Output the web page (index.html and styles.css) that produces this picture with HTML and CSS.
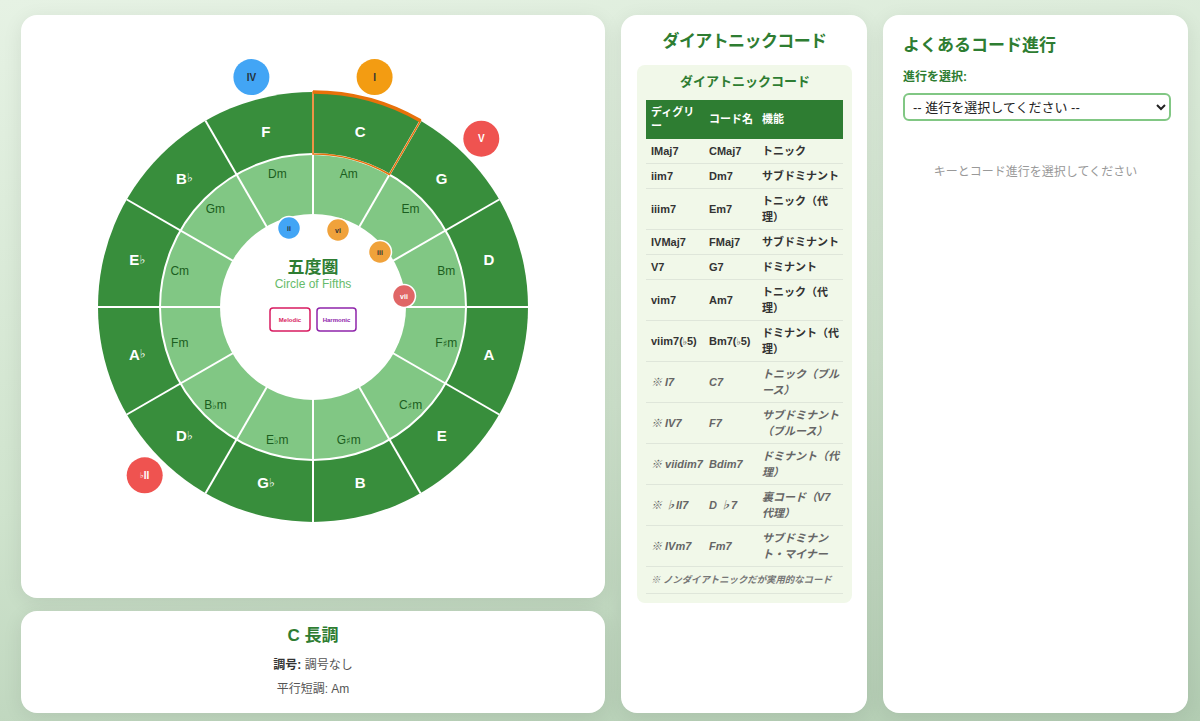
FILE: index.html
```html
<!DOCTYPE html>
<html lang="ja">
<head>
    <meta charset="UTF-8">
    <meta name="viewport" content="width=device-width, initial-scale=1.0">
    <title>五度圏 - Circle of Fifths</title>
    <link rel="stylesheet" href="styles.css">
</head>
<body>
    <div class="layout">
        <div class="left-column">
            <div class="card circle-card">
                <svg class="circle" width="520" height="520" viewBox="-260 -260 520 520">
                    <!-- rings -->
                    <circle r="215" fill="#388e3c"/>
                    <circle r="153" fill="#81c784"/>
                    <g stroke="#fff" stroke-width="2">
                        <line x1="0" y1="-215" x2="0" y2="215"/>
                        <line x1="0" y1="-215" x2="0" y2="215" transform="rotate(30)"/>
                        <line x1="0" y1="-215" x2="0" y2="215" transform="rotate(60)"/>
                        <line x1="0" y1="-215" x2="0" y2="215" transform="rotate(90)"/>
                        <line x1="0" y1="-215" x2="0" y2="215" transform="rotate(120)"/>
                        <line x1="0" y1="-215" x2="0" y2="215" transform="rotate(150)"/>
                    </g>
                    <circle r="153" fill="none" stroke="#fff" stroke-width="2"/>
                    <circle r="93" fill="#fff"/>

                    <!-- selected key -->
                    <path d="M0,-215 A215,215 0 0 1 107.5,-186.2 L76.5,-132.5 A153,153 0 0 0 0,-153 Z" fill="none" stroke="#e8710a" stroke-width="1.5"/>
                    <path d="M0,-215 A215,215 0 0 1 107.5,-186.2" fill="none" stroke="#e8710a" stroke-width="3.5"/>

                    <!-- major keys -->
                    <g class="major">
                        <text x="47.1" y="-175.8">C</text>
                        <text x="128.7" y="-128.7">G</text>
                        <text x="175.8" y="-47.1">D</text>
                        <text x="175.8" y="47.1">A</text>
                        <text x="128.7" y="128.7">E</text>
                        <text x="47.1" y="175.8">B</text>
                        <text x="-47.1" y="175.8">G<tspan class="acc">♭</tspan></text>
                        <text x="-128.7" y="128.7">D<tspan class="acc">♭</tspan></text>
                        <text x="-175.8" y="47.1">A<tspan class="acc">♭</tspan></text>
                        <text x="-175.8" y="-47.1">E<tspan class="acc">♭</tspan></text>
                        <text x="-128.7" y="-128.7">B<tspan class="acc">♭</tspan></text>
                        <text x="-47.1" y="-175.8">F</text>
                    </g>

                    <!-- minor keys -->
                    <g class="minor">
                        <text x="35.7" y="-133.3">Am</text>
                        <text x="97.6" y="-97.6">Em</text>
                        <text x="133.3" y="-35.7">Bm</text>
                        <text x="133.3" y="35.7">F<tspan class="acc">♯</tspan>m</text>
                        <text x="97.6" y="97.6">C<tspan class="acc">♯</tspan>m</text>
                        <text x="35.7" y="133.3">G<tspan class="acc">♯</tspan>m</text>
                        <text x="-35.7" y="133.3">E<tspan class="acc">♭</tspan>m</text>
                        <text x="-97.6" y="97.6">B<tspan class="acc">♭</tspan>m</text>
                        <text x="-133.3" y="35.7">Fm</text>
                        <text x="-133.3" y="-35.7">Cm</text>
                        <text x="-97.6" y="-97.6">Gm</text>
                        <text x="-35.7" y="-133.3">Dm</text>
                    </g>

                    <!-- center -->
                    <text class="center-title" x="0" y="-40">五度圏</text>
                    <text class="center-sub" x="0" y="-23">Circle of Fifths</text>
                    <rect x="-43" y="1" width="40" height="23" rx="3" fill="#fff" stroke="#d81b60" stroke-width="1.5"/>
                    <text class="mode-btn" x="-23" y="13" fill="#d81b60">Melodic</text>
                    <rect x="4" y="1" width="39" height="23" rx="3" fill="#fff" stroke="#8e24aa" stroke-width="1.5"/>
                    <text class="mode-btn" x="23.5" y="13" fill="#8e24aa">Harmonic</text>

                    <!-- degree badges -->
                    <g class="badge">
                        <circle cx="61.6" cy="-229.9" r="18" fill="#f39c12"/>
                        <text x="61.6" y="-229.9" fill="#333">I</text>
                        <circle cx="-61.6" cy="-229.9" r="18" fill="#42a5f5"/>
                        <text x="-61.6" y="-229.9" fill="#263238">IV</text>
                        <circle cx="168.3" cy="-168.3" r="18" fill="#ef5350"/>
                        <text x="168.3" y="-168.3" fill="#fff">V</text>
                        <circle cx="-168.3" cy="168.3" r="18" fill="#ef5350"/>
                        <text x="-168.3" y="168.3" fill="#fff"><tspan class="acc">♭</tspan>II</text>
                    </g>
                    <g class="badge small">
                        <circle cx="-24" cy="-79" r="11.5" fill="#42a5f5" stroke="#fff" stroke-width="1.5"/>
                        <text x="-24" y="-79" fill="#263238">ii</text>
                        <circle cx="25" cy="-77" r="11.5" fill="#f0a23b" stroke="#fff" stroke-width="1.5"/>
                        <text x="25" y="-77" fill="#333">vi</text>
                        <circle cx="67" cy="-55" r="11.5" fill="#f0a23b" stroke="#fff" stroke-width="1.5"/>
                        <text x="67" y="-55" fill="#333">iii</text>
                        <circle cx="91" cy="-11" r="11.5" fill="#e06666" stroke="#fff" stroke-width="1.5"/>
                        <text x="91" y="-11" fill="#fff">vii</text>
                    </g>
                </svg>
            </div>
            <div class="card key-info">
                <h3>C 長調</h3>
                <p><strong>調号:</strong> 調号なし</p>
                <p>平行短調: Am</p>
            </div>
        </div>

        <div class="card chords-card">
            <h2>ダイアトニックコード</h2>
            <div class="chord-box">
                <h4>ダイアトニックコード</h4>
                <table class="chord-table">
                    <colgroup>
                        <col style="width: 58px">
                        <col style="width: 53px">
                        <col style="width: 86px">
                    </colgroup>
                    <thead>
                        <tr><th>ディグリー</th><th>コード名</th><th>機能</th></tr>
                    </thead>
                    <tbody>
                        <tr><td>IMaj7</td><td>CMaj7</td><td>トニック</td></tr>
                        <tr><td>iim7</td><td>Dm7</td><td>サブドミナント</td></tr>
                        <tr><td>iiim7</td><td>Em7</td><td>トニック（代理）</td></tr>
                        <tr><td>IVMaj7</td><td>FMaj7</td><td>サブドミナント</td></tr>
                        <tr><td>V7</td><td>G7</td><td>ドミナント</td></tr>
                        <tr><td>vim7</td><td>Am7</td><td>トニック（代理）</td></tr>
                        <tr><td>viim7(<span class="acc">♭</span>5)</td><td>Bm7(<span class="acc">♭</span>5)</td><td>ドミナント（代理）</td></tr>
                        <tr class="extra"><td>※ I7</td><td>C7</td><td>トニック（ブルース）</td></tr>
                        <tr class="extra"><td>※ IV7</td><td>F7</td><td>サブドミナント（ブルース）</td></tr>
                        <tr class="extra"><td>※ viidim7</td><td>Bdim7</td><td>ドミナント（代理）</td></tr>
                        <tr class="extra"><td>※ ♭II7</td><td>D ♭7</td><td>裏コード（V7代理）</td></tr>
                        <tr class="extra"><td>※ IVm7</td><td>Fm7</td><td>サブドミナント・マイナー</td></tr>
                        <tr class="note"><td colspan="3">※ ノンダイアトニックだが実用的なコード</td></tr>
                    </tbody>
                </table>
            </div>
        </div>

        <div class="card progression-card">
            <h2>よくあるコード進行</h2>
            <label for="progression">進行を選択:</label>
            <select id="progression">
                <option value="">-- 進行を選択してください --</option>
            </select>
            <p class="empty">キーとコード進行を選択してください</p>
        </div>
    </div>
</body>
</html>
```

FILE: styles.css
```css
* {
    box-sizing: border-box;
}
body {
    margin: 0;
    padding: 15px 12px 8px 21px;
    min-height: 721px;
    font-family: "Liberation Sans", "Noto Sans CJK JP", sans-serif;
    color: #333;
    background: linear-gradient(170deg, #e6f2e4 0%, #cfe3cd 55%, #b2ccb2 100%);
}
.layout {
    display: grid;
    grid-template-columns: 584px 246px 305px;
    gap: 16px;
    height: 698px;
}
.card {
    background: #fff;
    border-radius: 16px;
    box-shadow: 0 4px 20px rgba(0, 0, 0, 0.08);
}
.left-column {
    display: flex;
    flex-direction: column;
    gap: 13px;
}
.circle-card {
    height: 583px;
    display: flex;
    align-items: center;
    justify-content: center;
}
.circle text {
    text-anchor: middle;
    dominant-baseline: central;
}
.circle .major text {
    fill: #fff;
    font-size: 15px;
    font-weight: bold;
}
.circle .minor text {
    fill: #1b5e20;
    font-size: 12px;
}
.circle .acc {
    font-family: "DejaVu Sans", sans-serif;
    font-size: 0.8em;
}
.circle .center-title {
    fill: #2e7d32;
    font-size: 17px;
    font-weight: bold;
}
.circle .center-sub {
    fill: #66bb6a;
    font-size: 12px;
}
.circle .mode-btn {
    font-size: 6px;
    font-weight: bold;
}
.circle .badge text {
    font-size: 10px;
    font-weight: bold;
}
.circle .badge.small text {
    font-size: 7px;
}
.key-info {
    flex: 1;
    padding: 14px 20px;
    text-align: center;
}
.key-info h3 {
    margin: 0;
    font-size: 17px;
    line-height: 22px;
    color: #2e7d32;
}
.key-info p {
    margin: 6px 0 0;
    font-size: 12px;
    line-height: 18px;
    color: #555;
}
.key-info p:first-of-type {
    margin-top: 9px;
}
.key-info strong {
    color: #333;
}
.chords-card {
    padding: 16px 15px 16px 16px;
}
.chords-card h2 {
    margin: 0 0 12px;
    font-size: 17px;
    line-height: 22px;
    letter-spacing: -0.6px;
    text-align: center;
    color: #2e7d32;
}
.chord-box {
    background: #f1f8e9;
    border-radius: 8px;
    padding: 8px 8px 9px 9px;
}
.chord-box h4 {
    margin: 0 0 9px;
    font-size: 13px;
    line-height: 18px;
    text-align: center;
    color: #2e7d32;
}
.chord-table {
    width: 197px;
    table-layout: fixed;
    border-collapse: collapse;
    font-size: 11px;
}
.chord-table th {
    background: #2e7d32;
    color: #fff;
    text-align: left;
    font-weight: bold;
    padding: 6px 2px 6px 5px;
    line-height: 13.5px;
}
.chord-table td {
    padding: 4px 2px 4px 5px;
    line-height: 16px;
    font-weight: bold;
    color: #333;
    border-bottom: 1px solid #dfe6da;
}
.chord-table td:first-child {
    white-space: nowrap;
    padding-right: 0;
}
.chord-table .acc {
    font-family: "DejaVu Sans", sans-serif;
    font-size: 0.8em;
}
.chord-table .extra td {
    font-style: italic;
    color: #666;
}
.chord-table .note td {
    font-size: 9.4px;
    font-style: italic;
    color: #777;
    padding: 5px 0 5px 5px;
    white-space: nowrap;
}
.progression-card {
    padding: 20px;
}
.progression-card h2 {
    margin: 0 0 12px;
    font-size: 17px;
    line-height: 22px;
    color: #2e7d32;
}
.progression-card label {
    display: block;
    font-size: 12px;
    line-height: 16px;
    font-weight: bold;
    color: #2e7d32;
    margin-bottom: 8px;
}
.progression-card select {
    width: 268px;
    height: 28px;
    padding: 2px 4px;
    font-family: "Liberation Sans", "Noto Sans CJK JP", sans-serif;
    font-size: 13px;
    color: #222;
    background: #fff;
    border: 2px solid #81c784;
    border-radius: 6px;
}
.empty {
    margin: 41px 0 0;
    text-align: center;
    font-size: 12px;
    color: #999;
}
```
